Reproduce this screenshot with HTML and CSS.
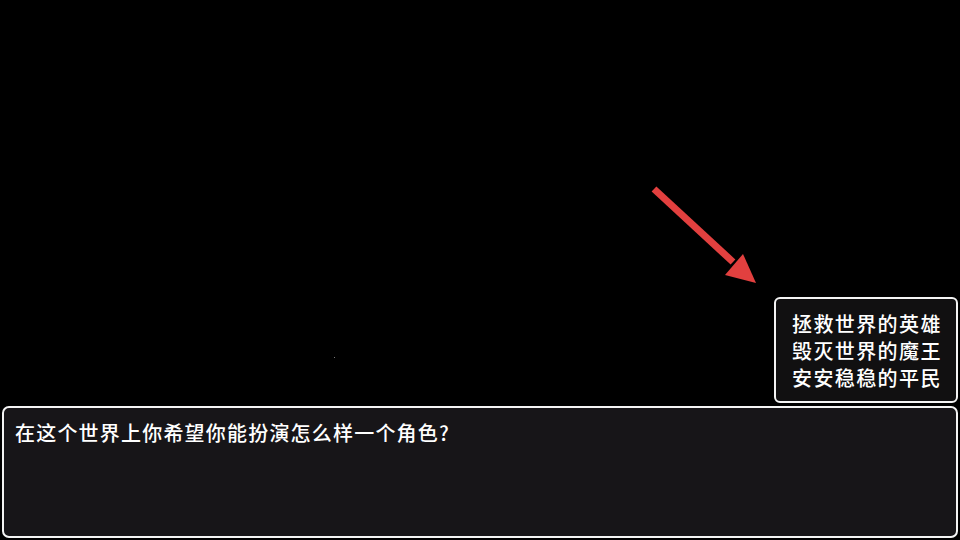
FILE: index.html
```html
<!DOCTYPE html>
<html lang="zh">
<head>
<meta charset="utf-8">
<link rel="stylesheet" href="styles.css">
</head>
<body>
<div class="screen">
  <svg class="arrow" width="960" height="540" viewBox="0 0 960 540">
    <line x1="654" y1="189" x2="733" y2="262" stroke="#e2403f" stroke-width="7" stroke-linecap="butt"/>
    <polygon points="756,283 725,275 743,254" fill="#e2403f"/>
  </svg>
  <span class="speck"></span>
  <div class="spacer"></div>
  <div class="choices">
    <div class="choice">拯救世界的英雄</div>
    <div class="choice">毁灭世界的魔王</div>
    <div class="choice">安安稳稳的平民</div>
  </div>
  <div class="dialog">
    <p class="message">在这个世界上你希望你能扮演怎么样一个角色?</p>
  </div>
</div>
</body>
</html>
```
FILE: styles.css
```css
html, body {
  margin: 0;
  padding: 0;
  background: #000;
}
.screen {
  position: relative;
  width: 960px;
  height: 540px;
  display: flex;
  flex-direction: column;
  font-family: "Noto Sans CJK SC", "Noto Sans", sans-serif;
  color: #fff;
  overflow: hidden;
}
.arrow {
  position: absolute;
  left: 0;
  top: 0;
}
.speck {
  position: absolute;
  left: 334px;
  top: 357px;
  width: 1px;
  height: 1px;
  background: #777;
}
.spacer {
  flex: 1;
}
.choices {
  align-self: flex-end;
  margin-right: 2px;
  width: 184px;
  height: 106px;
  box-sizing: border-box;
  border: 2px solid #f4f4f4;
  border-radius: 6px;
  background: #111011;
  padding: 11px 0 0 16px;
}
.choice {
  font-size: 20px;
  line-height: 27px;
  height: 27px;
  letter-spacing: 1.4px;
  font-weight: 500;
  white-space: nowrap;
}
.dialog {
  margin: 3px 2px 2px 2px;
  height: 132px;
  box-sizing: border-box;
  border: 2px solid #f4f4f4;
  border-radius: 7px;
  background: #171518;
  padding: 11px 11px;
}
.message {
  margin: 0;
  font-size: 20px;
  line-height: 28px;
  font-weight: 500;
  letter-spacing: 1.2px;
  white-space: nowrap;
}
```
